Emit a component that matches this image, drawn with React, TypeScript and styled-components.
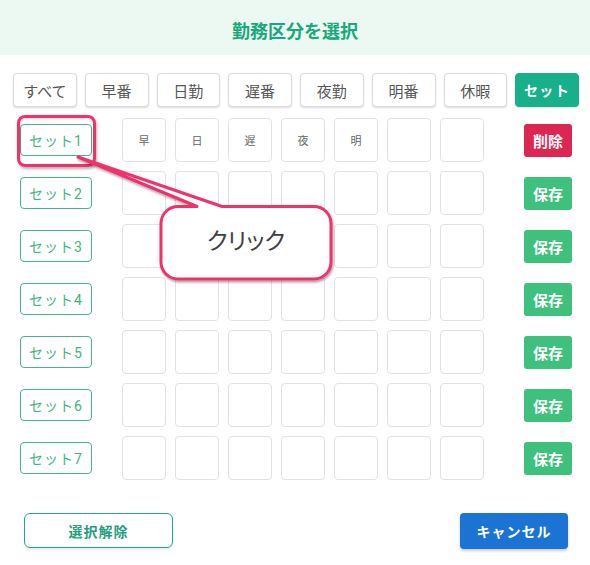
import React from "react";
import styled, { createGlobalStyle } from "styled-components";

const GlobalStyle = createGlobalStyle`
  html, body { margin: 0; padding: 0; background: #ffffff; }
  body { font-family: Roboto, "Noto Sans CJK JP", sans-serif; }
  * { box-sizing: border-box; }
`;

const Page = styled.div`
  position: relative;
  width: 590px;
  height: 565px;
  background: #ffffff;
  overflow: hidden;
`;

const Header = styled.header`
  height: 55px;
  padding-top: 4px;
  background: #ecf8f2;
  display: flex;
  align-items: center;
  justify-content: center;
`;

const Title = styled.h1`
  margin: 0;
  font-size: 18px;
  font-weight: 700;
  color: #1aa87d;
  letter-spacing: 0;
`;

const FilterBar = styled.div`
  display: grid;
  grid-template-columns: repeat(8, 1fr);
  column-gap: 8px;
  padding: 18px 11px 0 13px;
`;

const FilterButton = styled.button<{ $active?: boolean }>`
  height: 34px;
  border-radius: 4px;
  border: 1px solid ${(p) => (p.$active ? "#17b08a" : "#dcdcdc")};
  background: ${(p) => (p.$active ? "#17b08a" : "#ffffff")};
  color: ${(p) => (p.$active ? "#ffffff" : "#555555")};
  font-family: Roboto, "Noto Sans CJK JP", sans-serif;
  font-size: ${(p) => (p.$active ? "14px" : "15px")};
  font-weight: ${(p) => (p.$active ? 700 : 400)};
  letter-spacing: ${(p) => (p.$active ? "1.5px" : "0")};
  box-shadow: 0 1px 2px rgba(0, 0, 0, 0.14);
  padding: 0;
  cursor: pointer;
`;

const SetList = styled.div`
  display: flex;
  flex-direction: column;
  gap: 9px;
  padding-top: 11px;
`;

const SetRow = styled.div`
  display: flex;
  align-items: center;
  padding-left: 20px;
  height: 44px;
`;

const SetButton = styled.button`
  width: 72px;
  height: 32px;
  margin-right: 30px;
  border: 1px solid #45b58c;
  border-radius: 4px;
  background: #ffffff;
  color: #3db77c;
  font-family: Roboto, "Noto Sans CJK JP", sans-serif;
  font-size: 14px;
  letter-spacing: 1px;
  padding: 0;
  cursor: pointer;
`;

const Cells = styled.div`
  display: grid;
  grid-template-columns: repeat(7, 44px);
  column-gap: 9px;
`;

const Cell = styled.div`
  width: 44px;
  height: 44px;
  border: 1px solid #e2e2e2;
  border-radius: 4px;
  display: flex;
  align-items: center;
  justify-content: center;
  font-size: 11px;
  color: #666666;
`;

const ActionButton = styled.button<{ $danger?: boolean }>`
  width: 48px;
  height: 33px;
  margin-left: 40px;
  border: none;
  border-radius: 3px;
  background: ${(p) => (p.$danger ? "#dc2752" : "#3dc17c")};
  color: #ffffff;
  font-family: Roboto, "Noto Sans CJK JP", sans-serif;
  font-size: 15px;
  font-weight: 700;
  padding: 0;
  cursor: pointer;
`;

const Footer = styled.div`
  display: flex;
  justify-content: space-between;
  align-items: flex-start;
  padding: 33px 22px 0 24px;
`;

const ClearButton = styled.button`
  width: 149px;
  height: 35px;
  border: 1.5px solid #23a589;
  border-radius: 6px;
  background: #ffffff;
  color: #1f9e7e;
  font-family: Roboto, "Noto Sans CJK JP", sans-serif;
  font-size: 14px;
  font-weight: 700;
  letter-spacing: 1px;
  box-shadow: 0 2px 3px rgba(0, 0, 0, 0.08);
  padding: 0;
  cursor: pointer;
`;

const CancelButton = styled.button`
  width: 108px;
  height: 36px;
  border: none;
  border-radius: 4px;
  background: #1b74d4;
  color: #ffffff;
  font-family: Roboto, "Noto Sans CJK JP", sans-serif;
  font-size: 14px;
  font-weight: 700;
  letter-spacing: 1px;
  box-shadow: 0 2px 3px rgba(0, 0, 0, 0.2);
  padding: 0;
  cursor: pointer;
`;

const Highlight = styled.div`
  position: absolute;
  left: 17px;
  top: 115px;
  width: 79px;
  height: 52px;
  border: 3px solid #f0326b;
  border-radius: 8px;
  box-shadow: 1px 2px 3px rgba(0, 0, 0, 0.3), inset 1px 1px 2px rgba(0, 0, 0, 0.15);
  pointer-events: none;
`;

const Callout = styled.div`
  position: absolute;
  left: 60px;
  top: 145px;
  width: 285px;
  height: 145px;
  pointer-events: none;
`;

const CalloutSvg = styled.svg`
  display: block;
  width: 285px;
  height: 145px;
`;

const CalloutText = styled.div`
  position: absolute;
  left: 101px;
  top: 61px;
  width: 170px;
  height: 66px;
  display: flex;
  align-items: center;
  justify-content: center;
  font-family: "Noto Sans CJK JP", sans-serif;
  font-feature-settings: "palt";
  font-size: 23px;
  font-weight: 400;
  color: #404040;
`;

const filters = ["すべて", "早番", "日勤", "遅番", "夜勤", "明番", "休暇"];
const firstSet = ["早", "日", "遅", "夜", "明", "", ""];

export default function App() {
  const rows = Array.from({ length: 7 }, (_, i) => i);
  return (
    <>
      <GlobalStyle />
      <Page>
        <Header>
          <Title>勤務区分を選択</Title>
        </Header>
        <FilterBar>
          {filters.map((f) => (
            <FilterButton key={f}>{f}</FilterButton>
          ))}
          <FilterButton $active>セット</FilterButton>
        </FilterBar>
        <SetList>
          {rows.map((i) => (
            <SetRow key={i}>
              <SetButton>セット{i + 1}</SetButton>
              <Cells>
                {Array.from({ length: 7 }, (_, c) => (
                  <Cell key={c}>{i === 0 ? firstSet[c] : ""}</Cell>
                ))}
              </Cells>
              <ActionButton $danger={i === 0}>{i === 0 ? "削除" : "保存"}</ActionButton>
            </SetRow>
          ))}
        </SetList>
        <Footer>
          <ClearButton>選択解除</ClearButton>
          <CancelButton>キャンセル</CancelButton>
        </Footer>
        <Highlight />
        <Callout>
          <CalloutSvg viewBox="60 145 285 145">
            <defs>
              <filter id="shadow" x="-10%" y="-10%" width="130%" height="130%">
                <feDropShadow dx="1" dy="2" stdDeviation="1" floodColor="#000000" floodOpacity="0.35" />
              </filter>
            </defs>
            <path
              d="M 222 206.5 H 314 A 17 17 0 0 1 331 223.5 V 262 A 17 17 0 0 1 314 279 H 178 A 17 17 0 0 1 161 262 V 223.5 A 17 17 0 0 1 178 206.5 H 197 L 78 157 L 222 206.5 Z"
              fill="#ffffff"
              stroke="#f0326b"
              strokeWidth="3"
              strokeLinejoin="round"
              filter="url(#shadow)"
            />
          </CalloutSvg>
          <CalloutText>クリック</CalloutText>
        </Callout>
      </Page>
    </>
  );
}
